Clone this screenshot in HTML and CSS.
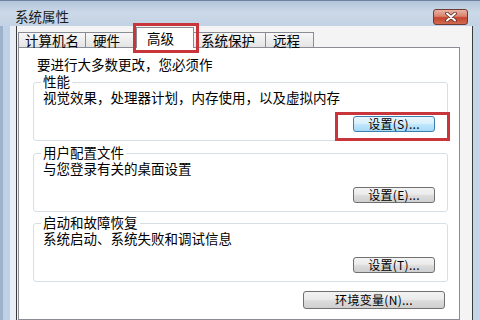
FILE: index.html
```html
<!DOCTYPE html>
<html lang="zh-CN">
<head>
<meta charset="utf-8">
<title>系统属性</title>
<link rel="stylesheet" href="styles.css">
</head>
<body>
<div class="window">
  <div class="titlebar">
    <span class="title">系统属性</span>
    <span class="close">
      <svg width="12" height="10" viewBox="0 0 12 10">
        <path d="M2 1.5 L10 8.5 M10 1.5 L2 8.5" stroke="#5a2a26" stroke-width="3.6" stroke-linecap="round"/>
        <path d="M2 1.5 L10 8.5 M10 1.5 L2 8.5" stroke="#ffffff" stroke-width="2" stroke-linecap="round"/>
      </svg>
    </span>
  </div>
  <div class="frame">
    <div class="client">
      <div class="tabs">
        <div class="tab tab-name">计算机名</div>
        <div class="tab tab-hw">硬件</div>
        <div class="tab tab-adv active">高级</div>
        <div class="tab tab-prot">系统保护</div>
        <div class="tab tab-remote">远程</div>
      </div>
      <div class="panel">
        <div class="note">要进行大多数更改，您必须作</div>
        <div class="group group-perf">
          <div class="group-title">性能</div>
          <div class="group-text">视觉效果，处理器计划，内存使用，以及虚拟内存</div>
          <div class="btn-row"><button class="btn focus">设置(S)...</button></div>
        </div>
        <div class="group group-profile">
          <div class="group-title">用户配置文件</div>
          <div class="group-text">与您登录有关的桌面设置</div>
          <div class="btn-row"><button class="btn">设置(E)...</button></div>
        </div>
        <div class="group group-startup">
          <div class="group-title">启动和故障恢复</div>
          <div class="group-text">系统启动、系统失败和调试信息</div>
          <div class="btn-row"><button class="btn">设置(T)...</button></div>
        </div>
        <div class="env-row"><button class="btn btn-env">环境变量(N)...</button></div>
      </div>
    </div>
  </div>
</div>
<div class="mark mark-tab"></div>
<div class="mark mark-btn"></div>
</body>
</html>
```

FILE: styles.css
```css
* { box-sizing: border-box; }

html, body {
  margin: 0;
  padding: 0;
}

body {
  width: 480px;
  height: 320px;
  overflow: hidden;
  position: relative;
  font-family: "Noto Sans CJK SC", "Noto Sans", sans-serif;
  color: #000;
  background: #c4d5e8;
}

.window {
  display: flex;
  flex-direction: column;
  height: 320px;
}

.titlebar {
  height: 26px;
  flex: none;
  display: flex;
  justify-content: space-between;
  align-items: flex-start;
  padding: 0 12px 0 15px;
  border-top: 1px solid #6d829c;
  background: linear-gradient(#b3c5da, #cbd8e7 45%, #c3d3e5);
}

.title {
  font-size: 13.5px;
  line-height: 15px;
  margin-top: 8px;
  color: #1b1b1b;
}

.close {
  width: 35px;
  height: 16px;
  margin-top: 8px;
  border: 1px solid #6e3a35;
  border-radius: 3px;
  background: linear-gradient(#eab3a4, #d9826d 45%, #c5452f 55%, #d26a4f);
  display: flex;
  align-items: center;
  justify-content: center;
}

.frame {
  flex: 1;
  display: flex;
  padding: 0 7px 0 16px;
  background: linear-gradient(to right, #9eb3ca 0 3px, #bed1e6 3px 10px, #e8eef4 10px 16px, #c4d5e8 16px);
}

.client {
  flex: 1;
  display: flex;
  flex-direction: column;
  background: #f4f4f4;
  border-left: 1px solid #3b3b3b;
  border-right: 1px solid #3b3b3b;
  padding: 1px 12px 0 1px;
}

.tabs {
  display: flex;
  align-items: flex-end;
  height: 20px;
  flex: none;
  position: relative;
  z-index: 1;
}

.tab {
  height: 15px;
  border: 1px solid #898c95;
  border-bottom: none;
  background: linear-gradient(#f7f7f7, #e4e4e4);
  font-size: 13.5px;
  line-height: 14px;
  padding-left: 6px;
  white-space: nowrap;
}

.tab-name { width: 68px; }
.tab-hw { width: 52px; margin-left: -1px; padding-left: 7px; }
.tab-adv { width: 58px; margin-left: -1px; }
.tab-prot { width: 73px; margin-left: -1px; padding-left: 7px; }
.tab-remote { width: 49px; margin-left: -1px; padding-left: 7px; }

.tab.active {
  height: 21px;
  margin-bottom: -1px;
  background: #fff;
  padding-left: 10px;
  line-height: 20px;
}

.panel {
  flex: 1;
  background: #fff;
  border: 1px solid #898c95;
  padding: 9px 11px 0 14px;
}

.note {
  font-size: 13.5px;
  line-height: 15px;
  padding-left: 4px;
}

.group {
  border: 1px solid #d8dfe4;
  border-radius: 3px;
  padding: 0 0 8px 9px;
}

.group-perf { margin-top: 10px; }
.group-profile { margin-top: 12px; }
.group-startup { margin-top: 11px; }

.group-title {
  display: table;
  margin: -8px 0 0 -2px;
  padding: 0 2px;
  background: #fff;
  font-size: 13.5px;
  line-height: 13px;
}

.group-text {
  font-size: 13.5px;
  line-height: 14px;
  margin-top: 2px;
}

.btn-row {
  display: flex;
  justify-content: flex-end;
  margin-top: 12px;
  padding-right: 12px;
}

.btn {
  width: 82px;
  height: 16px;
  padding: 0;
  border: 1px solid #707070;
  border-radius: 3px;
  background: linear-gradient(#f3f3f3, #ebebeb 45%, #dcdcdc 55%, #cfcfcf);
  font-family: "Noto Sans CJK SC", "Noto Sans", sans-serif;
  font-size: 12px;
  line-height: 14px;
  color: #000;
  letter-spacing: 0.3px;
}

.btn.focus {
  border-color: #3c7fb1;
  background: linear-gradient(#eaf6fd, #d9f0fc 45%, #bee6fd 55%, #a7d9f5);
}

.env-row {
  display: flex;
  justify-content: flex-end;
  margin-top: 9px;
  padding-right: 3px;
}

.btn-env {
  width: 142px;
  height: 18px;
}

.mark {
  position: absolute;
  border: 3px solid #c8363b;
  z-index: 5;
}

.mark-tab {
  left: 133px;
  top: 23px;
  width: 66px;
  height: 30px;
}

.mark-btn {
  left: 335px;
  top: 112px;
  width: 115px;
  height: 29px;
}
```
